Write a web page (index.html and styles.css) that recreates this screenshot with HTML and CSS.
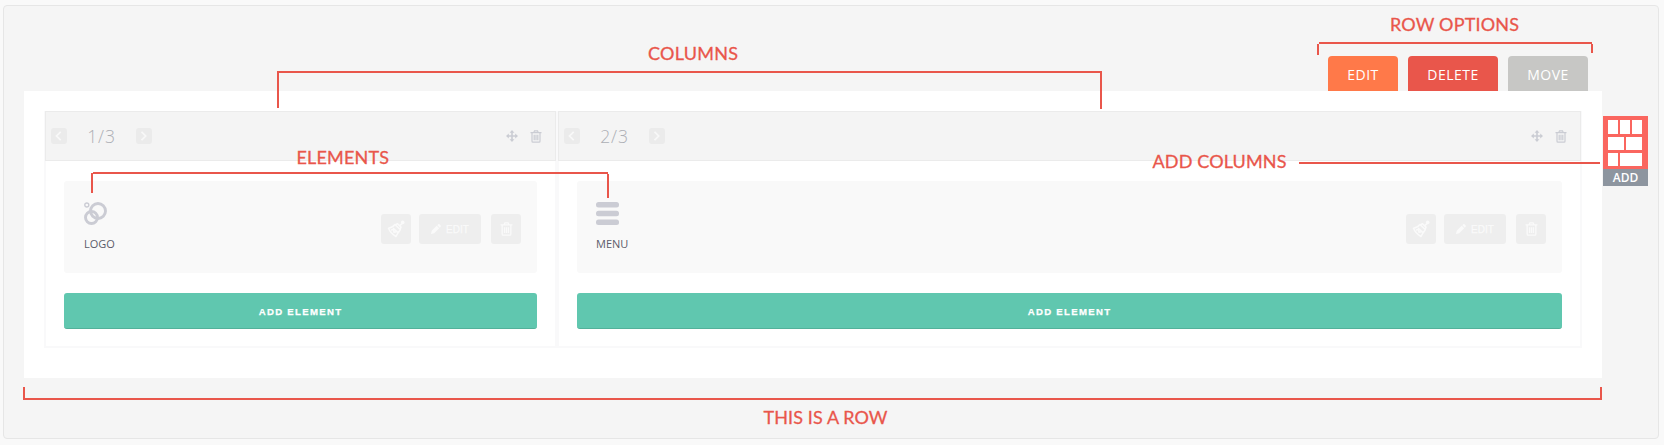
FILE: index.html
```
<!DOCTYPE html>
<html lang="en">
<head>
<meta charset="utf-8">
<title>Row builder</title>
<link rel="stylesheet" href="styles.css">
</head>
<body>
<svg class="defs" width="0" height="0">
  <symbol id="move" viewBox="0 0 12 12"><path d="M6 1.5v9M1.5 6h9" fill="none" stroke="currentColor" stroke-width="1.6"/><path d="M6 0l2.4 2.8H3.6zM6 12l2.4-2.8H3.6zM0 6l2.8-2.4v4.8zM12 6L9.2 3.6v4.8z" fill="currentColor"/></symbol>
  <symbol id="trash" viewBox="0 0 12 13"><path d="M.5 2.7h11M3.8 2.5l.7-1.7h3l.7 1.7M2 3v8.3q0 .9.9.9h6.2q.9 0 .9-.9V3M4.2 4.8v5.4M6 4.8v5.4M7.8 4.8v5.4" fill="none" stroke="currentColor" stroke-width="1.2"/></symbol>
  <symbol id="brush" viewBox="0 0 18 18"><path d="M1.5 8.2C4.300 8 6.300 6.500 8 4.500l5.300 5.200C11.500 12 10.200 14 9 16.500 5.500 14.500 3 12 1.500 8.200zM6 8l5 4.500M4 10l2.500-.5.5 2.800 2.500-.5M8.500 5l2-1.300 3.500 3.400-.9 2M13 5.500l3-3" fill="none" stroke="currentColor" stroke-width="1.500" stroke-linejoin="round"/><circle cx="15.700" cy="2.400" r="1.800" fill="currentColor"/></symbol>
  <symbol id="pencil" viewBox="0 0 11 11"><path d="M0 11l.8-3.500 5.500-5.500 2.700 2.700-5.500 5.500zM7 1.300L8 .4q.7-.6 1.400 0l1.200 1.200q.6.700 0 1.400l-.9 1z" fill="currentColor"/></symbol>
  <symbol id="rings" viewBox="0 0 23 23"><g fill="none" stroke="currentColor"><circle cx="14" cy="9" r="7.500" stroke-width="2.900"/><circle cx="7.500" cy="15.500" r="6" stroke-width="2.900"/><circle cx="2.800" cy="3" r="2" stroke-width="1.400"/></g></symbol>
  <symbol id="bars" viewBox="0 0 23 23"><g fill="currentColor"><rect width="23" height="5.500" rx="2.500"/><rect y="8.700" width="23" height="5.500" rx="2.500"/><rect y="17.400" width="23" height="5.500" rx="2.500"/></g></symbol>
  <symbol id="left" viewBox="0 0 16 16"><path d="M9.700 3.800L5.500 8l4.200 4.200" fill="none" stroke="currentColor" stroke-width="1.700"/></symbol>
  <symbol id="right" viewBox="0 0 16 16"><path d="M5.500 3.800L9.700 8l-4.200 4.200" fill="none" stroke="currentColor" stroke-width="1.700"/></symbol>
</svg>

<main class="panel">
  <nav class="tabs">
    <a class="tab tab-edit">EDIT</a>
    <a class="tab tab-delete">DELETE</a>
    <a class="tab tab-move">MOVE</a>
  </nav>
  <div class="stage">
    <section class="row">
      <article class="column narrow">
        <header class="column-head">
          <svg class="step"><use href="#left"/></svg>
          <span class="size">1/3</span>
          <svg class="step"><use href="#right"/></svg>
          <span class="head-tools"><svg class="move"><use href="#move"/></svg><svg class="trash"><use href="#trash"/></svg></span>
        </header>
        <div class="column-body">
          <div class="element">
            <div class="element-name"><svg class="element-icon"><use href="#rings"/></svg><span>LOGO</span></div>
            <div class="element-tools">
              <span class="tool"><svg class="brush"><use href="#brush"/></svg></span>
              <span class="tool tool-edit"><svg class="pencil"><use href="#pencil"/></svg>EDIT</span>
              <span class="tool"><svg class="bin"><use href="#trash"/></svg></span>
            </div>
          </div>
          <div class="add-element">ADD ELEMENT</div>
        </div>
      </article>
      <article class="column wide">
        <header class="column-head">
          <svg class="step"><use href="#left"/></svg>
          <span class="size">2/3</span>
          <svg class="step"><use href="#right"/></svg>
          <span class="head-tools"><svg class="move"><use href="#move"/></svg><svg class="trash"><use href="#trash"/></svg></span>
        </header>
        <div class="column-body">
          <div class="element">
            <div class="element-name"><svg class="element-icon"><use href="#bars"/></svg><span>MENU</span></div>
            <div class="element-tools">
              <span class="tool"><svg class="brush"><use href="#brush"/></svg></span>
              <span class="tool tool-edit"><svg class="pencil"><use href="#pencil"/></svg>EDIT</span>
              <span class="tool"><svg class="bin"><use href="#trash"/></svg></span>
            </div>
          </div>
          <div class="add-element">ADD ELEMENT</div>
        </div>
      </article>
    </section>
    <aside class="add-columns">
      <svg class="bricks" viewBox="0 0 45 53"><path fill="#fff" d="M5 4h10v14H5zM17 4h10v14H17zM29 4h10v14H29zM5 21h16v13H5zM23 21h16v13H23zM5 37h10v13H5zM17 37h22v13H17z"/></svg>
      <span class="add-label">ADD</span>
    </aside>
  </div>
</main>

<svg class="notes" viewBox="0 0 1664 445">
  <g class="note-lines">
    <path d="M278 108V72H1101V109"/>
    <path d="M92 193V173M93 173H608M608 174V198"/>
    <path d="M1318 55V44M1319 43H1592M1592 44V53"/>
    <path d="M1299 163H1600"/>
    <path d="M24 387V399H1601V387"/>
  </g>
  <g class="note-text">
    <text x="648" y="60" textLength="90">COLUMNS</text>
    <text x="296.500" y="164" textLength="92.500">ELEMENTS</text>
    <text x="1390" y="31" textLength="129">ROW OPTIONS</text>
    <text x="1152.500" y="168" textLength="134">ADD COLUMNS</text>
    <text x="763.500" y="423.500" textLength="124">THIS IS A ROW</text>
  </g>
</svg>
</body>
</html>
```
FILE: styles.css
```
* { box-sizing: border-box; }
body { margin: 0; padding: 5px 5px 6px 3px; height: 445px; overflow: hidden; background: #f9f9f9; font-family: "Open Sans", "Noto Sans", sans-serif; }
svg { display: block; flex: none; }
.defs { position: absolute; }
.panel { height: 434px; border: 1px solid #e6e6e6; border-radius: 4px; background: #f5f5f5; padding: 50px 10px 0 20px; }

.tabs { display: flex; justify-content: flex-end; gap: 10px; height: 35px; padding-right: 60px; }
.tab { display: flex; align-items: center; justify-content: center; border-radius: 4px 4px 0 0; color: #fff; font-size: 14px; letter-spacing: .5px; padding-top: 1px; }
.tab-edit { width: 70px; background: #ff7949; }
.tab-delete { width: 90px; background: #e9564b; }
.tab-move { width: 80px; background: #c7c7c5; }

.stage { display: flex; align-items: flex-start; gap: 1px; }
.row { display: flex; width: 1578px; height: 287px; padding: 20px 20px 30px; background: #fff; }
.column { height: 237px; border: 2px solid #f9f9fa; border-top: 0; }
.narrow { width: 513px; }
.wide { width: 1025px; }
.column-head { display: flex; align-items: center; height: 50px; margin: 0 -1px; padding: 0 13px 0 5px; background: #f4f4f4; border: 1px solid #ebebeb; }
.step { width: 16px; height: 16px; border-radius: 3px; background: #ebebeb; color: #f8f8f8; }
.size { width: 69px; padding-bottom: 1px; text-align: center; color: #acafb4; font-size: 17.5px; font-weight: 300; letter-spacing: .8px; }
.head-tools { display: flex; align-items: center; gap: 12px; margin-left: auto; color: #caccd3; }
.move { width: 12px; height: 12px; }
.trash { width: 12px; height: 13px; }
.column-body { padding: 20px 18px 0; }
.element { display: flex; justify-content: space-between; height: 92px; padding: 21px 16px 0 20px; border-radius: 3px; background: #f9f9f9; }
.wide .element { padding-left: 19px; }
.element-name { display: flex; flex-direction: column; gap: 11px; color: #5c5c6a; font-size: 11px; line-height: 16px; }
.element-icon { width: 23px; height: 23px; color: #cbccd4; }
.element-tools { display: flex; gap: 8px; padding-top: 12px; color: #fafafa; }
.tool { display: flex; align-items: center; justify-content: center; width: 30px; height: 30px; border-radius: 3px; background: #eee; }
.tool-edit { width: 62px; margin-right: 2px; gap: 5px; font: 10px "Liberation Sans", Arial, sans-serif; -webkit-text-stroke: .25px #fafafa; }
.brush { width: 18px; height: 18px; }
.pencil { width: 10px; height: 10px; }
.bin { width: 13px; height: 14px; }
.add-element { display: flex; align-items: center; justify-content: center; height: 36px; margin-top: 20px; border-radius: 3px; border-bottom: 1px solid #53b19a; background: #60c7af; color: #fff; font: bold 9.6px "Liberation Sans", Arial, sans-serif; letter-spacing: 1.3px; padding-top: 1px; -webkit-text-stroke: .25px #fff; }

.add-columns { width: 45px; margin-top: 25px; background: #fa665f; }
.bricks { width: 45px; height: 53px; }
.add-label { display: block; height: 17px; background: #8d959f; color: #fff; font-size: 12px; font-weight: 600; line-height: 17px; text-align: center; }

.notes { position: absolute; left: 0; top: 0; width: 1664px; height: 445px; pointer-events: none; }
.note-lines { fill: none; stroke: #e9564b; stroke-width: 2; }
.note-text { fill: #e9564b; stroke: #e9564b; stroke-width: .3px; font: 18px Lato, sans-serif; }
```
